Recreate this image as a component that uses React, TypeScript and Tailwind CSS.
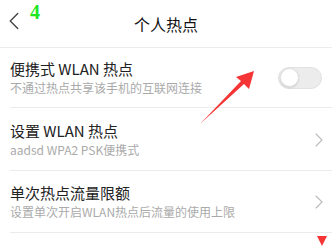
import { ChevronLeft, ChevronRight } from "lucide-react";

type RowProps = {
	title: string;
	sub: string;
	pad: string;
	right: React.ReactNode;
};

function Row({ title, sub, pad, right }: RowProps) {
	return (
		<div className={`ml-[10px] flex items-center border-b border-[#ebebeb] pr-[10px] ${pad}`}>
			<div className="min-w-0 flex-1">
				<div className="text-[15px] leading-[20px] text-[#222]">{title}</div>
				<div className="mt-[1px] text-[12px] leading-[16px] text-[#aaa]">{sub}</div>
			</div>
			{right}
		</div>
	);
}

export default function App() {
	return (
		<div
			className="relative h-[247px] w-[332px] overflow-hidden bg-white"
			style={{ fontFamily: '"Noto Sans CJK SC", "Noto Sans", sans-serif' }}
		>
			<div className="relative flex h-[48px] items-center justify-center border-b border-[#ececec]">
				<ChevronLeft className="absolute left-[-1px] top-[6px] h-[30px] w-[30px] text-[#444]" strokeWidth={1.1} />
				<span
					className="absolute left-[30px] top-[1px] text-[20px] font-bold leading-[22px] text-[#22e622]"
					style={{ fontFamily: '"Liberation Serif", serif' }}
				>
					4
				</span>
				<span className="text-[16px] leading-[20px] text-[#111]">个人热点</span>
			</div>

			<Row
				title="便携式 WLAN 热点"
				sub="不通过热点共享该手机的互联网连接"
				pad="pt-[11px] pb-[11px]"
				right={
					<div className="flex h-[22px] w-[44px] items-center rounded-full border border-[#e2e2e2] bg-[#ececec] px-[1px]">
						<div className="h-[19px] w-[19px] rounded-full border border-[#e0e0e0] bg-white shadow-[0_1px_2px_rgba(0,0,0,0.12)]" />
					</div>
				}
			/>
			<Row
				title="设置 WLAN 热点"
				sub="aadsd WPA2 PSK便携式"
				pad="pt-[13px] pb-[12px]"
				right={<ChevronRight className="mr-[-9px] h-[24px] w-[24px] text-[#bbb]" strokeWidth={1.1} />}
			/>
			<Row
				title="单次热点流量限额"
				sub="设置单次开启WLAN热点后流量的使用上限"
				pad="pt-[12px] pb-[12px]"
				right={<ChevronRight className="mr-[-9px] h-[24px] w-[24px] text-[#bbb]" strokeWidth={1.1} />}
			/>

			{/* annotation overlays */}
			<svg className="pointer-events-none absolute left-0 top-0" width="332" height="247" viewBox="0 0 332 247">
				<polygon points="200,124 241,81 236,77 254,71 249,89 244,84" fill="#f53535" />
				<polygon points="317,236 327,236 322,246" fill="#f53535" />
			</svg>
		</div>
	);
}
